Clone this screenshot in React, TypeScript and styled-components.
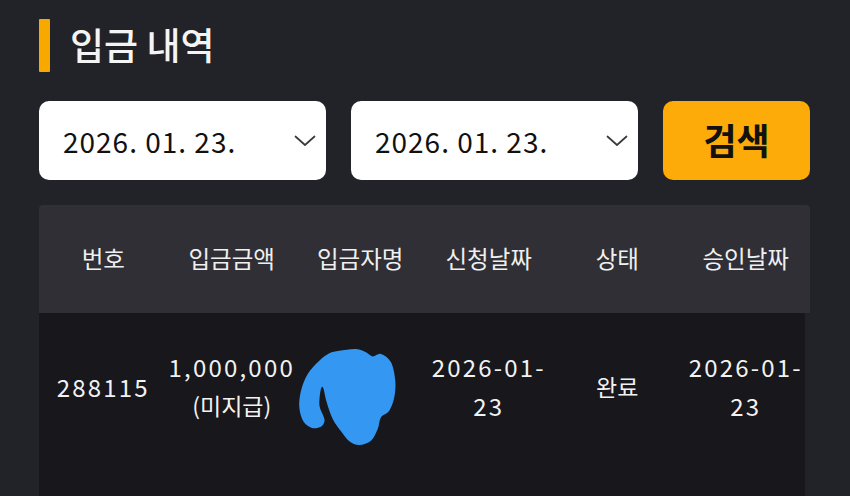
import React from 'react'
import styled, { createGlobalStyle } from 'styled-components'

const GlobalStyle = createGlobalStyle`
  html, body {
    margin: 0;
    padding: 0;
    background: #222328;
  }
  body {
    font-family: "Noto Sans CJK KR", "Noto Sans", sans-serif;
  }
`

const Page = styled.div`
  min-height: 100vh;
  box-sizing: border-box;
  padding: 19px 40px 0 39px;
  display: flex;
  flex-direction: column;
  background: #222328;
`

const TitleRow = styled.div`
  display: flex;
  align-items: center;
  gap: 20px;
  height: 53px;
`

const Accent = styled.span`
  width: 11px;
  height: 53px;
  background: #f7a900;
  border-radius: 1px;
`

const Title = styled.h1`
  margin: 0;
  font-size: 37px;
  font-weight: 500;
  color: #f4f4f4;
  line-height: 1;
  padding-bottom: 2px;
`

const Filters = styled.div`
  display: grid;
  grid-template-columns: 1fr 1fr 147px;
  gap: 25px;
  margin-top: 29px;
  height: 79px;
`

const DateBox = styled.div`
  background: #ffffff;
  border-radius: 10px;
  display: flex;
  align-items: center;
  justify-content: space-between;
  padding: 0 9px 0 24px;
  font-size: 28px;
  letter-spacing: 1px;
  color: #111111;
`

const SearchButton = styled.button`
  border: none;
  border-radius: 10px;
  background: #fcab08;
  color: #111111;
  font-family: "Noto Sans CJK KR", sans-serif;
  font-size: 36px;
  font-weight: 700;
  padding: 0 0 4px;
`

const Table = styled.div`
  margin-top: 25px;
  flex: 1;
  display: flex;
  flex-direction: column;
`

const HeadRow = styled.div`
  display: grid;
  grid-template-columns: repeat(6, 1fr);
  height: 108px;
  align-items: center;
  background: #2f2f35;
  border-radius: 4px 4px 0 0;
`

const HeadCell = styled.div`
  text-align: center;
  font-size: 23.5px;
  color: #f0f0f0;
  padding-bottom: 2px;
`

const Body = styled.div`
  flex: 1;
  margin-right: 5px;
  background: #17171c;
`

const BodyRow = styled.div`
  display: grid;
  grid-template-columns: repeat(6, 1fr);
  height: 146px;
  margin-right: -5px;
`

const Cell = styled.div`
  position: relative;
  display: flex;
  flex-direction: column;
  align-items: center;
  justify-content: center;
  color: #f2f2f2;
`

const Line = styled.span<{ $num?: boolean }>`
  font-size: ${(p) => (p.$num ? '24px' : '23px')};
  letter-spacing: ${(p) => (p.$num ? '2.2px' : '0')};
  line-height: 39px;
  white-space: nowrap;
`

const Mask = styled.svg`
  position: absolute;
  left: -6px;
  top: 27px;
`

// outline of the blue marker scribble that hides the depositor name
const blobPoints: [number, number][] = [
  [49.3, 10.7], [66, 9], [76, 12.3], [82.7, 16.5], [91, 14], [101, 22.3],
  [105.3, 40.7], [104.3, 57.3], [99.3, 70.7], [91, 77.3], [87.7, 89],
  [81, 100.7], [69.3, 105], [59.3, 101.3], [51, 91.3], [42.7, 79],
  [36.7, 62.3], [33, 47.5], [30.5, 51], [29.5, 65.7], [33.3, 75.7],
  [34.5, 81.3], [31, 86.7], [22, 88], [13.3, 81.3], [9.3, 67.3],
  [11, 50.7], [17.7, 34], [29.3, 20.7], [39.3, 13.3],
]

function smoothPath(pts: [number, number][]) {
  const n = pts.length
  let d = `M${pts[0][0]} ${pts[0][1]}`
  for (let i = 0; i < n; i++) {
    const p0 = pts[(i - 1 + n) % n]
    const p1 = pts[i]
    const p2 = pts[(i + 1) % n]
    const p3 = pts[(i + 2) % n]
    const c1x = p1[0] + (p2[0] - p0[0]) / 6
    const c1y = p1[1] + (p2[1] - p0[1]) / 6
    const c2x = p2[0] - (p3[0] - p1[0]) / 6
    const c2y = p2[1] - (p3[1] - p1[1]) / 6
    d += ` C${c1x.toFixed(1)} ${c1y.toFixed(1)} ${c2x.toFixed(1)} ${c2y.toFixed(1)} ${p2[0]} ${p2[1]}`
  }
  return d + ' Z'
}

function Chevron() {
  return (
    <svg width="24" height="14" viewBox="0 0 24 14">
      <path d="M2.5 2.5 L12 11 L21.5 2.5" fill="none" stroke="#3a3a3a" strokeWidth="1.7" strokeLinecap="round" strokeLinejoin="round" />
    </svg>
  )
}

const headers = ['번호', '입금금액', '입금자명', '신청날짜', '상태', '승인날짜']

export default function App() {
  return (
    <Page>
      <GlobalStyle />
      <TitleRow>
        <Accent />
        <Title>입금 내역</Title>
      </TitleRow>

      <Filters>
        <DateBox>
          <span>2026. 01. 23.</span>
          <Chevron />
        </DateBox>
        <DateBox>
          <span>2026. 01. 23.</span>
          <Chevron />
        </DateBox>
        <SearchButton>검색</SearchButton>
      </Filters>

      <Table>
        <HeadRow>
          {headers.map((h) => (
            <HeadCell key={h}>{h}</HeadCell>
          ))}
        </HeadRow>
        <Body>
          <BodyRow>
            <Cell>
              <Line $num>288115</Line>
            </Cell>
            <Cell>
              <Line $num>1,000,000</Line>
              <Line>(미지급)</Line>
            </Cell>
            <Cell>
              <Mask width="120" height="110" viewBox="0 0 120 110">
                <path d={smoothPath(blobPoints)} fill="#3497f2" />
              </Mask>
            </Cell>
            <Cell>
              <Line $num>2026-01-</Line>
              <Line $num>23</Line>
            </Cell>
            <Cell>
              <Line>완료</Line>
            </Cell>
            <Cell>
              <Line $num>2026-01-</Line>
              <Line $num>23</Line>
            </Cell>
          </BodyRow>
        </Body>
      </Table>
    </Page>
  )
}
